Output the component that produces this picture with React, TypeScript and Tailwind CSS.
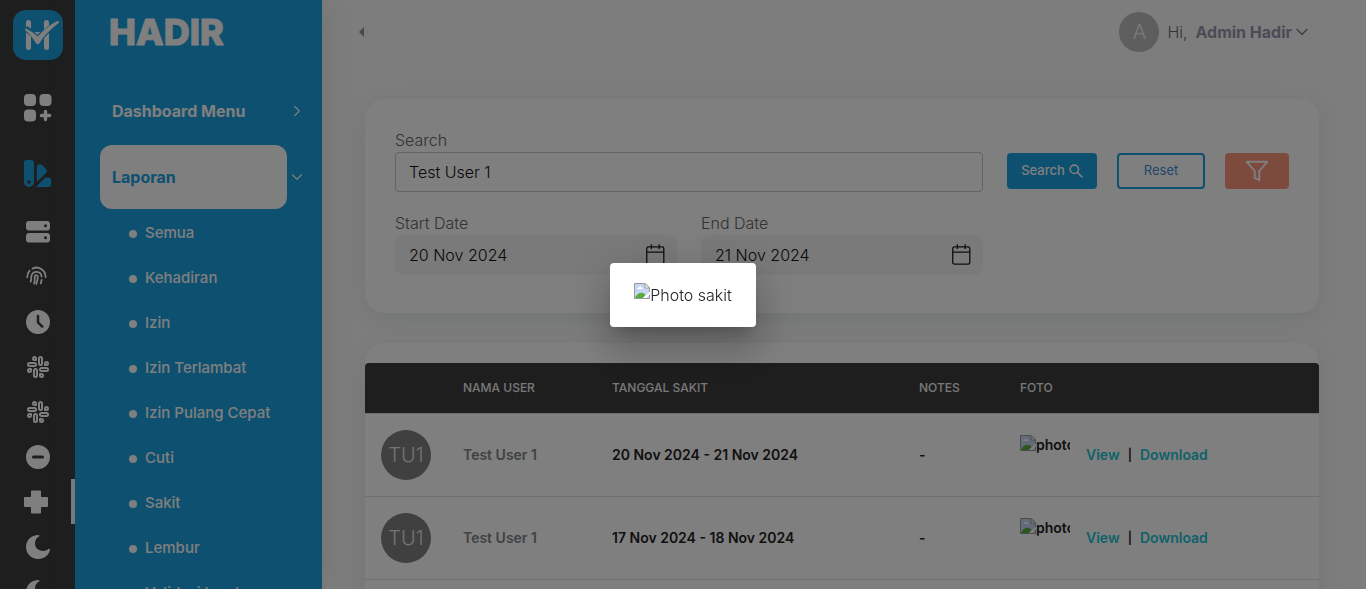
import type { ReactNode } from "react";
import { ChevronDown, ChevronRight, Slack } from "lucide-react";

function LogoMark() {
  return (
    <svg width="50" height="50" viewBox="0 0 50 50" aria-hidden="true">
      <rect width="50" height="50" rx="13" fill="#1ca0e0" />
      <g fill="none" stroke="#fff" strokeLinecap="round">
        <path d="M15.5 12.5V37.5M33.5 12.5V37.5" strokeWidth="5" />
        <path d="M12.5 18.5Q20 23 25 31Q32 21 45 12.5" stroke="#1ca0e0" strokeWidth="6" strokeLinecap="butt" />
        <path d="M22.5 22.500H26.500L24.600 24Z" fill="#fff" strokeWidth="1" strokeLinejoin="round" />
      </g>
      <path
        d="M12.200 18.200C17 20.300 21.500 23.300 24.700 26.400C30 20.500 37 14.500 44.400 11C45.600 10.500 46.500 11.900 45.600 12.900C38 18.500 31 25.500 26.200 33.400C25.500 34.500 24 34.500 23.200 33.400C20 28.500 16.500 23.500 12 20Z"
        fill="#fff"
      />
    </svg>
  );
}

function GridPlusIcon() {
  return (
    <svg width="28" height="28" viewBox="0 0 28 28" fill="#fff" aria-hidden="true">
      <rect x="0" y="0" width="12" height="12" rx="4" />
      <rect x="15.500" y="0" width="12" height="12" rx="4" />
      <rect x="0" y="15.500" width="12" height="12" rx="4" />
      <path d="M21.500 17.400V25.600M17.400 21.500H25.600" stroke="#fff" strokeWidth="3.400" strokeLinecap="round" />
    </svg>
  );
}

function SwatchIcon() {
  return (
    <svg width="28" height="28" viewBox="0.5 0.5 28 28" fill="#1ca0e0" aria-hidden="true">
      <path
        fillRule="evenodd"
        d="M3.500 0.500H7.500A3 3 0 0 1 10.500 3.500V22.500A5 5 0 0 1 0.500 22.500V3.500A3 3 0 0 1 3.500 0.500ZM5.500 20.700A1.800 1.800 0 1 0 5.500 24.300A1.800 1.800 0 1 0 5.500 20.700Z"
      />
      <path d="M13.300 6.500C14.500 4.500 17 4 18.500 5.500L22.300 9.300C23.700 10.700 23.600 12.500 22.300 13.800L13.300 22.500Z" />
      <path d="M12.500 27.500L22 18H24.700A3 3 0 0 1 27.700 21V24.500A3 3 0 0 1 24.700 27.500Z" />
    </svg>
  );
}

function ServerIcon() {
  return (
    <svg width="24" height="22" viewBox="0 0 24 22" aria-hidden="true">
      <rect y="0" width="24" height="9.500" rx="3" fill="#fff" />
      <rect y="12" width="24" height="9.500" rx="3" fill="#fff" />
      <circle cx="19.500" cy="4.800" r="1.500" fill="#3c3c3c" />
      <circle cx="19.500" cy="16.800" r="1.500" fill="#3c3c3c" />
    </svg>
  );
}

function FingerprintIcon() {
  return (
    <svg width="24" height="22" viewBox="0 0 24 22" fill="none" stroke="#fff" strokeWidth="1.800" strokeLinecap="round" aria-hidden="true">
      <path d="M1.200 11.200C1.200 8.300 2.200 6.300 3.600 4.700M6.500 2.600C12.500 -0.500 19.500 4 19.600 11" />
      <path d="M4.700 15.600C5.600 13.700 5 12 5.300 10.400C6.600 4.300 15 4.500 15.600 10.700" />
      <path d="M8.100 17.500C9.400 14.500 8.300 12.200 8.800 10.300C9.400 8.700 11.700 8.800 11.800 10.700C11.800 13.700 11.300 15.200 10.300 18" />
      <path d="M15.600 14L14.800 17.400" />
    </svg>
  );
}

function ClockIcon() {
  return (
    <svg width="24" height="24" viewBox="0 0 24 24" aria-hidden="true">
      <circle cx="12" cy="12" r="12" fill="#fff" />
      <path d="M12 6V12.300L16.300 16.600" fill="none" stroke="#3c3c3c" strokeWidth="2.500" strokeLinecap="round" strokeLinejoin="round" />
    </svg>
  );
}

function MinusIcon() {
  return (
    <svg width="24" height="24" viewBox="0 0 24 24" aria-hidden="true">
      <circle cx="12" cy="12" r="12" fill="#fff" />
      <path d="M7.500 12H16.500" stroke="#3c3c3c" strokeWidth="3" strokeLinecap="round" />
    </svg>
  );
}

function CrossIcon() {
  return (
    <svg width="28" height="24" viewBox="0 0 28 24" fill="#fff" aria-hidden="true">
      <path d="M8 .6H16A1 1 0 0 1 17 1.600V7H23A1 1 0 0 1 24 8V16A1 1 0 0 1 23 17H17V22.500A1 1 0 0 1 16 23.500H8A1 1 0 0 1 7 22.500V17H1A1 1 0 0 1 0 16V8A1 1 0 0 1 1 7H7V1.600A1 1 0 0 1 8 .6Z" />
    </svg>
  );
}

function MoonIcon() {
  return (
    <svg width="24" height="24" viewBox="0 0 24 24" fill="#fff" aria-hidden="true">
      <path d="M12.600 0C5 0 0 5.500 0 12C0 18.800 5.300 24 12 24C18 24 23.300 20 24 14.500C24 13.600 23 13.500 22.500 14C18 18 9 15.500 9 8.500C9 5.300 10.500 3 13 1.500C13.700 1 13.500 0 12.600 0Z" />
    </svg>
  );
}

function CalendarIcon() {
  return (
    <svg width="20" height="24" viewBox="0 0 20 24" fill="none" stroke="#1c1c1c" strokeWidth="1.400" aria-hidden="true">
      <rect x="0.800" y="3.200" width="18.400" height="18.600" rx="1.800" />
      <path d="M.8 9H19.200M5.800 .5V5.500M14.200 .5V5.500" />
    </svg>
  );
}

function SearchIcon() {
  return (
    <svg width="14" height="14" viewBox="0 0 14 14" fill="none" stroke="#fff" strokeWidth="1.600" strokeLinecap="round" aria-hidden="true">
      <circle cx="5.300" cy="5.300" r="4.200" />
      <path d="M8.500 8.500L13 13" />
    </svg>
  );
}

function FunnelIcon() {
  return (
    <svg width="24" height="22" viewBox="0 0 24 22" fill="none" stroke="#fff" strokeWidth="1.900" strokeLinejoin="round" aria-hidden="true">
      <path d="M1.800 1.800H22.200L14.300 11V20.200L9.700 18V11Z" />
    </svg>
  );
}

function BrokenImageIcon() {
  return (
    <svg width="16" height="16" viewBox="0 0 16 16" className="shrink-0" aria-hidden="true">
      <path d="M.5 .5H11L15.500 5V15.500H.5Z" fill="#c6d7f5" stroke="#9a9a9a" />
      <path d="M3 6C3 4.500 4.500 4.500 5 4.500C5.500 3 8 3.500 8 5C9 5 9 6 8.500 6Z" fill="#fff" />
      <path d="M1 15C2.500 11 6 9 9 10C10.500 10.500 11 11.500 11.500 12L8.500 15Z" fill="#5aac3a" />
      <path d="M9 15L16 8.500V11L12.500 15Z" fill="#fff" />
      <path d="M11 .5V5H15.500Z" fill="#fff" stroke="#9a9a9a" strokeLinejoin="round" />
    </svg>
  );
}

const moduleIcons: { label: string; icon: ReactNode }[] = [
  { label: "Semua", icon: <ServerIcon /> },
  { label: "Kehadiran", icon: <FingerprintIcon /> },
  { label: "Izin", icon: <ClockIcon /> },
  { label: "Izin Terlambat", icon: <Slack size={24} color="#fff" /> },
  { label: "Izin Pulang Cepat", icon: <Slack size={24} color="#fff" /> },
  { label: "Cuti", icon: <MinusIcon /> },
  { label: "Sakit", icon: <CrossIcon /> },
  { label: "Lembur", icon: <MoonIcon /> },
  { label: "Validasi Lembur", icon: <MoonIcon /> },
];

function IconRail() {
  return (
    <nav aria-label="Modules" className="flex w-[75px] shrink-0 flex-col bg-[#3c3c3c]">
      <a href="#home" aria-label="Hadir" className="flex h-[75px] shrink-0 justify-center pt-[10px]">
        <LogoMark />
      </a>
      <a href="#dashboard" aria-label="Dashboard" className="flex h-[66px] shrink-0 items-center justify-center">
        <GridPlusIcon />
      </a>
      <a href="#laporan" aria-label="Laporan" className="mb-[2px] flex h-[66px] shrink-0 items-center justify-center">
        <SwatchIcon />
      </a>
      {moduleIcons.map((item) => (
        <a
          key={item.label}
          href="#module"
          aria-label={item.label}
          className={
            item.label === "Sakit"
              ? "flex h-[45px] shrink-0 items-center justify-center border-r-4 border-white pl-1"
              : "flex h-[45px] shrink-0 items-center justify-center"
          }
        >
          {item.icon}
        </a>
      ))}
    </nav>
  );
}

function SideMenu() {
  return (
    <nav
      aria-label="Menu"
      className="flex w-[247px] shrink-0 flex-col bg-[#1ca0e0] text-white shadow-[0_0_30px_rgba(60,110,90,0.14)]"
    >
      <div className="flex h-[78px] shrink-0 items-start pt-3 pl-[34px]">
        <span className="text-4xl leading-10 font-extrabold [-webkit-text-stroke:1px_white]">HADIR</span>
      </div>
      <a href="#dashboard" className="flex h-[66px] shrink-0 items-center justify-between pr-4 pl-[37px] text-base font-bold">
        Dashboard Menu
        <ChevronRight size={18} strokeWidth={1.5} />
      </a>
      <div className="mt-px mb-[2px] flex h-16 shrink-0 items-center justify-between pr-4 pl-[25px]">
        <a
          href="#laporan"
          className="flex h-16 w-[187px] items-center rounded-xl bg-white pl-3 text-base font-bold text-[#1ca0e0]"
        >
          Laporan
        </a>
        <ChevronDown size={18} strokeWidth={1.5} />
      </div>
      <ul>
        {moduleIcons.map((item) => (
          <li key={item.label}>
            <a href="#module" className="flex h-[45px] items-center gap-2 pl-[54px] font-medium">
              <span className="size-2 rounded-full bg-white" />
              {item.label}
            </a>
          </li>
        ))}
      </ul>
    </nav>
  );
}

function TopBar() {
  return (
    <header className="flex h-16 items-center justify-between pr-[58px] pl-[37px]">
      <button type="button" aria-label="Collapse menu">
        <svg width="5" height="10" viewBox="0 0 5 10" fill="#8b8fa6" aria-hidden="true">
          <path d="M5 0V10L0 5Z" />
        </svg>
      </button>
      <button type="button" className="flex items-center gap-2 text-base text-[#666]">
        <span className="flex size-10 items-center justify-center rounded-full bg-[#bdbdbd] text-xl font-light text-[#f5f5f5]">
          A
        </span>
        <span className="font-light">Hi,</span>
        <span className="flex items-center gap-1 font-bold text-[#9497ab]">
          Admin Hadir
          <svg width="12" height="8" viewBox="0 0 12 8" fill="none" stroke="#777b92" strokeWidth="1.300" aria-hidden="true">
            <path d="M.7 1L6 6.500L11.300 1" />
          </svg>
        </span>
      </button>
    </header>
  );
}

function DateField({ id, label, value }: { id: string; label: string; value: string }) {
  return (
    <div className="flex-1">
      <label htmlFor={id} className="block text-base leading-6 font-light text-[#666]">
        {label}
      </label>
      <div className="flex h-10 items-center rounded-lg bg-[#f5f5f5] pr-3">
        <input
          id={id}
          defaultValue={value}
          className="h-10 w-full min-w-0 bg-transparent pl-[14px] text-base font-light text-[#111] outline-none"
        />
        <CalendarIcon />
      </div>
    </div>
  );
}

function FilterCard() {
  return (
    <form className="h-[214px] rounded-[20px] bg-white px-[30px] pt-[29px] shadow-[0_5px_25px_rgba(60,110,90,0.12)]">
      <div className="flex items-end">
        <div className="flex-1">
          <label htmlFor="search" className="block text-base leading-6 font-light text-[#666]">
            Search
          </label>
          <input
            id="search"
            defaultValue="Test User 1"
            className="block h-10 w-full rounded border border-[#c4c4c4] px-[13px] text-base font-light text-[#111] outline-none"
          />
        </div>
        <div className="mb-[3px] ml-6 flex gap-5 text-[13px] font-medium">
          <button type="button" className="flex h-9 w-[90px] items-center justify-center gap-1 rounded bg-[#1ca0e0] text-white">
            Search
            <SearchIcon />
          </button>
          <button type="button" className="h-9 w-[88px] rounded border-2 border-[#1ca0e0] font-normal text-[#3f8fd8]">
            Reset
          </button>
          <button type="button" aria-label="Filter" className="flex h-9 w-16 items-center justify-center rounded bg-[#fa967c]">
            <FunnelIcon />
          </button>
        </div>
      </div>
      <div className="mt-[19px] flex gap-6 pr-[306px]">
        <DateField id="start" label="Start Date" value="20 Nov 2024" />
        <DateField id="end" label="End Date" value="21 Nov 2024" />
      </div>
    </form>
  );
}

const rows = ["20 Nov 2024 - 21 Nov 2024", "17 Nov 2024 - 18 Nov 2024", "14 Nov 2024 - 15 Nov 2024"];

function SickLeaveTable() {
  return (
    <section className="mt-[30px] rounded-[20px] bg-white pt-5 shadow-[0_5px_25px_rgba(60,110,90,0.12)]">
      <div className="overflow-hidden rounded">
        <table className="w-full table-fixed border-collapse text-left text-sm font-semibold">
          <thead className="bg-[#3c3c3c] text-xs text-[#f0f0f0]">
            <tr className="h-[50px] border-b border-[#dcdcdc]">
              <th className="w-[82px]" aria-label="Avatar" />
              <th className="w-[149px] px-4 font-medium">NAMA USER</th>
              <th className="w-[307px] px-4 font-medium">TANGGAL SAKIT</th>
              <th className="w-[101px] px-4 font-medium">NOTES</th>
              <th className="px-4 font-medium">FOTO</th>
            </tr>
          </thead>
          <tbody>
            {rows.map((period) => (
              <tr key={period} className="h-[83px] border-b border-[#dcdcdc]">
                <td className="pl-4">
                  <span className="flex size-[50px] items-center justify-center rounded-full bg-[#808080] text-xl font-light text-[#e6e6e6]">
                    TU1
                  </span>
                </td>
                <td className="px-4 text-[#808488]">Test User 1</td>
                <td className="px-4 text-[#222]">{period}</td>
                <td className="px-4 text-[#222]">-</td>
                <td className="px-4 text-[#222]">
                  <div className="flex items-center">
                    <span className="mr-4 flex h-10 w-[50px] items-start overflow-hidden leading-5">
                      <BrokenImageIcon />
                      photo
                    </span>
                    <a href="#view" className="text-[#20c4d4]">
                      View
                    </a>
                    <span className="mx-2 text-xs">|</span>
                    <a href="#download" className="text-[#20c4d4]">
                      Download
                    </a>
                  </div>
                </td>
              </tr>
            ))}
          </tbody>
        </table>
      </div>
    </section>
  );
}

function PhotoDialog() {
  return (
    <div className="fixed inset-0 flex items-center justify-center bg-black/50">
      <div
        role="dialog"
        aria-modal="true"
        aria-label="Photo sakit"
        className="rounded bg-white px-6 py-5 text-base font-light text-[#222] shadow-[0_11px_15px_-7px_rgba(0,0,0,0.2),0_24px_38px_3px_rgba(0,0,0,0.14),0_9px_46px_8px_rgba(0,0,0,0.12)]"
      >
        <div className="flex items-start leading-6">
          <BrokenImageIcon />
          Photo sakit
        </div>
      </div>
    </div>
  );
}

export default function App() {
  return (
    <div className="flex h-screen overflow-hidden bg-[#fafafa] font-[Inter,sans-serif] text-[15px]">
      <IconRail />
      <SideMenu />
      <main className="min-w-0 flex-1">
        <TopBar />
        <div className="pt-[35px] pr-[47px] pl-[43px]">
          <FilterCard />
          <SickLeaveTable />
        </div>
      </main>
      <PhotoDialog />
    </div>
  );
}
